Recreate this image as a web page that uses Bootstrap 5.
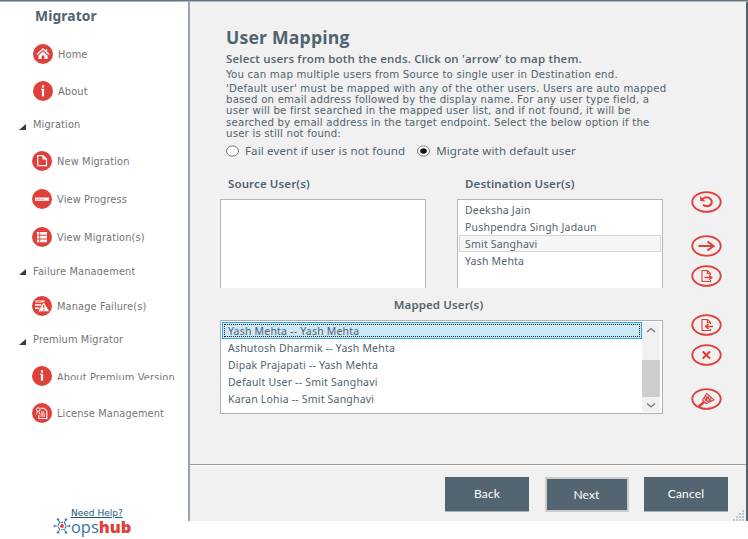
<!DOCTYPE html>
<html lang="en">
<head>
<meta charset="utf-8">
<title>Migrator - User Mapping</title>
<meta name="viewport" content="width=device-width, initial-scale=1">
<link href="https://cdn.jsdelivr.net/npm/bootstrap@5.3.0/dist/css/bootstrap.min.css" rel="stylesheet">
<style>
:root{--slate:#50636f;--red:#e0403a}
body{width:748px;height:539px;overflow:hidden;background:#fff;color:var(--slate);font:11px/1 "Noto Sans","Open Sans",sans-serif}
.topline{height:2px;background:#647681;border-bottom:1px solid #aab5bc}
.side{width:188px;height:537px;font:9.8px/14px "DejaVu Sans",sans-serif;letter-spacing:.14px;color:#747474;white-space:nowrap}
.side-title{height:33px;padding:4px 0 0 35px;font:700 13.8px/19px "Noto Sans",sans-serif;color:var(--slate)}
.side-row{padding-left:33px}
.side-sub{padding-left:32px}
.side-row span,.side-sub span{margin-top:1px}
.disc{width:20px;height:20px;margin-right:5px;flex:none}
.side-group{padding-left:19px}
.side-group svg{width:7px;height:6px;margin:3px 7px 0 0;flex:none}
.h22{height:22px}.h24{height:24px}.h26{height:26px}.h32{height:32px}.h36{height:36px}.h38{height:38px}.h40{height:40px}.h46{height:46px}.h50{height:50px}
.clip-a{height:8px;line-height:9px;margin-top:1px;overflow:hidden}
.side-sub .clip-b{height:7px;line-height:9px;margin-top:0;overflow:hidden}
.help{margin:82px 0 0 71px;font-size:9px;line-height:12px;letter-spacing:0;color:#1b5675;text-decoration:underline}
.brand{margin:0 0 0 53px;font:500 16.4px/16px "Open Sans",sans-serif;letter-spacing:0;color:#3474ac}
.brand b{font-weight:800;color:var(--red)}
.brand svg{width:18px;height:18px;margin-top:-2px}
.main{width:560px;height:519px;background:#f1f1f1;border-left:2px solid #98a5ae;border-right:2px solid #50636f}
.intro{height:168px;padding:22px 0 0 36px;white-space:nowrap}
.intro h1{font:700 17.6px/26px "Open Sans",sans-serif;letter-spacing:.2px;margin:0}
.lead-in{font:600 11.5px/16px "Open Sans",sans-serif;letter-spacing:.17px;margin-top:1px}
.note{font:10.2px/14px "DejaVu Sans",sans-serif;letter-spacing:.19px;margin-top:1px}
.rules{font:10.2px/11.2px "DejaVu Sans",sans-serif;letter-spacing:.19px;margin-top:1px}
.choice{margin-top:4px;height:16px;font-size:11.5px;letter-spacing:.14px}
.choice svg{width:13px;height:12px;margin-right:6px}
.lists{width:443px;margin-left:30px}
.cap{font-weight:600;font-size:11.5px;line-height:16px;letter-spacing:.12px}
.cap-top{padding:6px 0 7px 8px}
.cap-mid{padding:9px 6px 7px 0}
.box-user{width:206px;height:89px;background:#fff;border:1px solid #b4b7ba;border-bottom:0;padding:1px 1px}
.opt{height:17.1px;line-height:16px;padding-left:5px;border:1px solid transparent;font-size:10.5px;letter-spacing:.2px;white-space:nowrap}
.opt.hot{background:#f6f6f6;border-color:#d8d8d8}
.box-map{width:443px;height:94px;background:#fff;border:1px solid #a9b2b9;padding:1px}
.opt.picked{background:#cbe8f6;border:1px solid #3aa5dc;outline:1px dotted #222;outline-offset:-3px}
.bar{width:18px;margin-right:1px;background:#f0f0f0}
.bar svg{width:18px;height:18px;display:block}
.thumb{height:37px;margin:20px 0 0;background:#cdcdcd}
.acts{margin-left:28px;width:32px;padding-top:20px}
.acts svg{width:31px;height:24px;display:block;fill:none;stroke:var(--red)}
.gap-a{margin-top:20px}.gap-b{margin-top:6px}.gap-c{margin-top:24.500px}
.foot{height:57px;border-top:1px solid #999;box-shadow:inset 0 1px #fff;padding:12px 18px 0 0;column-gap:15.5px}
.wbtn{width:84px;height:35px;background:#536570;border:0 solid #aab3b9;border-bottom-width:1px;border-radius:0;color:#fff;font:12px/34px Lato,sans-serif;letter-spacing:.15px;padding:0}
.wbtn.cur{border:2px solid #ccc;line-height:30px}
.grip{position:absolute;left:733px;top:509px;width:12px;height:12px}
</style>
<script src="https://cdn.jsdelivr.net/npm/bootstrap@5.3.0/dist/js/bootstrap.bundle.min.js"></script>
</head>
<body>
<div class="topline"></div>
<div class="d-flex">
<nav class="side d-flex flex-column">
 <div class="side-title"><span>Migrator</span></div>
 <div class="side-row h38 d-flex align-items-center"><svg class="disc" viewBox="0 0 20 20"><circle cx="10" cy="10" r="10" fill="#e0403a"/><path d="M4 10.500L10 5l6 5.500M13.500 5v3" fill="none" stroke="#fff" stroke-width="1.300"/><path d="M5.500 11.400L10 7.500l4.500 3.900V15H11.300V11.500H8.700V15H5.500z" fill="#fff"/></svg><span>Home</span></div>
 <div class="side-row h36 d-flex align-items-center"><svg class="disc" viewBox="0 0 20 20"><circle cx="10" cy="10" r="10" fill="#e0403a"/><path d="M8.900 4.200h2.200v2.200H8.900zM8.200 7.800h2.900v7.700H8.900V9H8.200z" fill="#fff"/></svg><span>About</span></div>
 <div class="side-group h32 d-flex align-items-center"><svg viewBox="0 0 7 6"><path d="M7 0v6H0z" fill="#3a3a3a"/></svg><span>Migration</span></div>
 <div class="side-sub h40 d-flex align-items-center"><svg class="disc" viewBox="0 0 20 20"><circle cx="10" cy="10" r="10" fill="#e0403a"/><path d="M5.700 4.700h5.300L14.500 8v6.700H5.700z" fill="none" stroke="#fff" stroke-width="1.200"/><path d="M10.500 4.500V8.500h4z" fill="#fff"/></svg><span>New Migration</span></div>
 <div class="side-sub h36 d-flex align-items-center"><svg class="disc" viewBox="0 0 20 20"><circle cx="10" cy="10" r="10" fill="#e0403a"/><path d="M3 8.500h14v3.300H3z" fill="#fff"/><path d="M3.800 9.500h4.700v1.300H3.800z" fill="#f3a19d"/><path d="M9 10.200h3" stroke="#e0403a" stroke-width=".6"/></svg><span>View Progress</span></div>
 <div class="side-sub h40 d-flex align-items-center"><svg class="disc" viewBox="0 0 20 20"><circle cx="10" cy="10" r="10" fill="#e0403a"/><path d="M5 5h2.300v2.700H5zM8.200 5H15v2.700H8.200zM5 8.800h2.300v2.700H5zM8.200 8.800H15v2.700H8.200zM5 12.600h2.300v2.700H5zM8.200 12.600H15v2.700H8.200z" fill="#fff"/></svg><span>View Migration(s)</span></div>
 <div class="side-group h26 d-flex align-items-center"><svg viewBox="0 0 7 6"><path d="M7 0v6H0z" fill="#3a3a3a"/></svg><span class="clip-a">Failure Management</span></div>
 <div class="side-sub h46 d-flex align-items-center"><svg class="disc" viewBox="0 0 20 20"><circle cx="10" cy="10" r="10" fill="#e0403a"/><path d="M3.500 4.500h9v2h-9zM3 8.200h7.500v1.500H3zM3 11.400h6v1.500H3z" fill="#fff"/><path d="M4.500 5.500h5" stroke="#e0403a" stroke-width=".6"/><path d="M11.700 5.800l6 9.900h-12z" fill="#fff" stroke="#e0403a" stroke-width=".8"/><path d="M11.700 9v3.300M11.700 13.200v1.200" stroke="#e0403a" stroke-width="1.200"/></svg><span>Manage Failure(s)</span></div>
 <div class="side-group h22 d-flex align-items-center"><svg viewBox="0 0 7 6"><path d="M7 0v6H0z" fill="#3a3a3a"/></svg><span>Premium Migrator</span></div>
 <div class="side-sub h50 d-flex align-items-center"><svg class="disc" viewBox="0 0 20 20"><circle cx="10" cy="10" r="10" fill="#e0403a"/><path d="M8.900 4.200h2.200v2.200H8.900zM8.200 7.800h2.900v7H8.900V9H8.200z" fill="#fff"/></svg><span class="clip-b">About Premium Version</span></div>
 <div class="side-sub h24 d-flex align-items-center"><svg class="disc" viewBox="0 0 20 20"><circle cx="10" cy="10" r="10" fill="#e0403a"/><path d="M8.500 5.200h3.500L14.800 8v7.500H6.800V12M9 9h3M8.500 11h4.500M8.500 13h4.500" fill="none" stroke="#fff" stroke-width="1.100"/><circle cx="6.200" cy="6.500" r="1.800" fill="none" stroke="#fff"/><path d="M5.300 8.300L4.500 11.500M7 8.300l.5 3" fill="none" stroke="#fff" stroke-width=".9"/></svg><span>License Management</span></div>
 <a class="help" href="#"><span>Need Help?</span></a>
 <div class="brand d-flex align-items-center"><svg viewBox="0 0 18 18"><g stroke="#3474ac" stroke-width="1" fill="#3474ac"><path d="M1 9h3.500M13.500 9H17M7 6L5 2.500M11 6l2-3.500M7 12l-2 3.500M11 12l2 3.500"/><circle cx="1.500" cy="9" r=".6"/><circle cx="16.500" cy="9" r=".6"/><circle cx="5" cy="2.500" r=".8"/><circle cx="13" cy="2.500" r=".8"/><circle cx="5" cy="15.500" r=".8"/><circle cx="13" cy="15.500" r=".8"/></g><circle cx="9" cy="9" r="3.800" fill="#fff" stroke="#3474ac" stroke-width="1.100" stroke-dasharray="2.800 1.180"/><circle cx="9" cy="9" r="1.900" fill="#e0403a"/></svg><span>ops<b>hub</b></span></div>
</nav>
<main class="main d-flex flex-column">
 <section class="intro">
  <h1><span>User Mapping</span></h1>
  <div class="lead-in"><span>Select users from both the ends. Click on 'arrow' to map them.</span></div>
  <div class="note"><span>You can map multiple users from Source to single user in Destination end.</span></div>
  <div class="rules"><span>'Default user' must be mapped with any of the other users. Users are auto mapped</span><br><span>based on email address followed by the display name. For any user type field, a</span><br><span>user will be first searched in the mapped user list, and if not found, it will be</span><br><span>searched by email address in the target endpoint. Select the below option if the</span><br><span>user is still not found:</span></div>
  <div class="choice d-flex align-items-center">
   <svg viewBox="0 0 13 12"><ellipse cx="6.500" cy="6" rx="6" ry="5.100" fill="#fff" stroke="#777"/></svg><span class="me-2 pe-1">Fail event if user is not found</span>
   <svg viewBox="0 0 13 12"><ellipse cx="6.500" cy="6" rx="6" ry="5.100" fill="#fff" stroke="#777"/><ellipse cx="6.500" cy="6" rx="3.300" ry="2.800" fill="#111"/></svg><span>Migrate with default user</span>
  </div>
 </section>
 <section class="d-flex flex-grow-1">
  <div class="lists">
   <div class="d-flex justify-content-between">
    <div><div class="cap cap-top"><span>Source User(s)</span></div><div class="box-user"></div></div>
    <div><div class="cap cap-top"><span>Destination User(s)</span></div>
     <div class="box-user"><div class="opt"><span>Deeksha Jain</span></div><div class="opt"><span>Pushpendra Singh Jadaun</span></div><div class="opt hot"><span>Smit Sanghavi</span></div><div class="opt"><span>Yash Mehta</span></div></div></div>
   </div>
   <div class="cap cap-mid text-center"><span>Mapped User(s)</span></div>
   <div class="box-map d-flex">
    <div class="flex-grow-1"><div class="opt picked"><span>Yash Mehta -- Yash Mehta</span></div><div class="opt"><span>Ashutosh Dharmik -- Yash Mehta</span></div><div class="opt"><span>Dipak Prajapati -- Yash Mehta</span></div><div class="opt"><span>Default User -- Smit Sanghavi</span></div><div class="opt"><span>Karan Lohia -- Smit Sanghavi</span></div></div>
    <div class="bar"><svg viewBox="0 0 18 18"><path d="M5 10l4-3.500L13 10" fill="none" stroke="#777" stroke-width="1.300"/></svg><div class="thumb"></div><svg viewBox="0 0 18 18"><path d="M5 6.500L9 10l4-3.500" fill="none" stroke="#777" stroke-width="1.300"/></svg></div>
   </div>
  </div>
  <div class="acts">
   <svg viewBox="0 0 31 24"><ellipse cx="15.500" cy="12" rx="14.200" ry="9.900" stroke-width="1.900"/><path d="M11 9.500C13 7.300 16 6.800 18.500 8.200c4 2.500 2.500 8-2.500 8-1.800 0-3-.5-4-1.400" stroke-width="1.900"/><path d="M9.200 6v5.200h5.200z" fill="#e0403a" stroke="none"/></svg>
   <svg class="gap-a" viewBox="0 0 31 24"><ellipse cx="15.500" cy="12" rx="14.200" ry="9.900" stroke-width="1.900"/><path d="M7.500 12h14.500M16.500 7.500l6 4.500-6 4.500" stroke-width="2.100"/></svg>
   <svg class="gap-b" viewBox="0 0 31 24"><ellipse cx="15.500" cy="12" rx="14.200" ry="9.900" stroke-width="1.900"/><path d="M19.500 11V9.500L16.500 6.500H11v11h8.500v-1.500M16.300 6.500v3.200h3.200" stroke-width="1.100"/><path d="M13.500 13.500h7M18 11.200l2.800 2.300-2.800 2.300" stroke-width="1.400"/></svg>
   <svg class="gap-c" viewBox="0 0 31 24"><ellipse cx="15.500" cy="12" rx="14.200" ry="9.900" stroke-width="1.900"/><path d="M19.500 11V9.500L16.500 6.500H11v11h8.500v-1.500M16.300 6.500v3.200h3.200" stroke-width="1.100"/><path d="M14.500 13.500h7.500M17.500 11l-2.800 2.500 2.800 2.500" stroke-width="1.500"/></svg>
   <svg class="gap-b" viewBox="0 0 31 24"><ellipse cx="15.500" cy="12" rx="14.200" ry="9.900" stroke-width="1.900"/><path d="M11.700 8.500l7.300 7M19 8.500l-7.300 7" stroke-width="2.100"/></svg>
   <svg class="gap-a" viewBox="0 0 31 24"><ellipse cx="15.500" cy="12" rx="14.200" ry="9.900" stroke-width="1.900"/><path d="M7.500 20l5.500-5" stroke-width="2.600"/><path d="M11.500 13l4.200-6.500 7.300 6.300-8 3.700zM13 11l4.500 4M14.500 9l5.500 4.500M16 12.500l2-3.700M14.500 14l1.500-4.500M18 14l2.200-3.400" stroke-width="1.100"/></svg>
  </div>
 </section>
 <footer class="foot d-flex justify-content-end"><button class="btn wbtn"><span>Back</span></button><button class="btn wbtn cur"><span>Next</span></button><button class="btn wbtn"><span>Cancel</span></button></footer>
</main>
</div>
<svg class="grip" viewBox="0 0 12 12"><path d="M9 1h2v2H9zM6 4h2v2H6zM9 4h2v2H9zM3 7h2v2H3zM6 7h2v2H6zM9 7h2v2H9zM0 10h2v2H0zM3 10h2v2H3zM6 10h2v2H6zM9 10h2v2H9z" fill="#bcc6d2"/></svg>
</body>
</html>
